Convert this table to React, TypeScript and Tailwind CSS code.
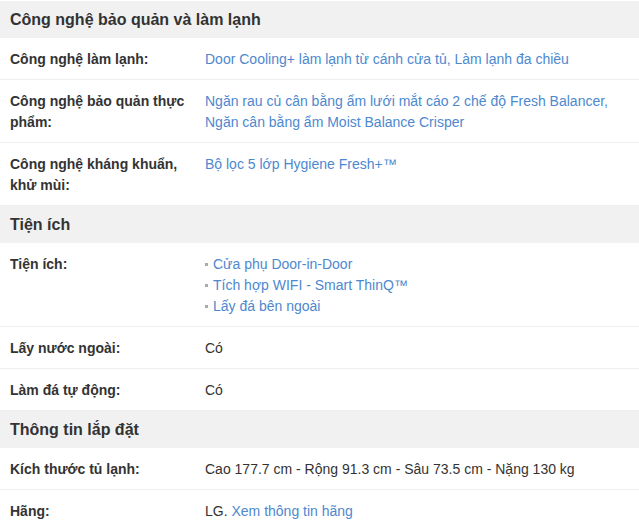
const blue = "text-[#4d88cf]";

type Row = {
  label: string;
  value?: React.ReactNode;
};

function Header({ title }: { title: string }) {
  return (
    <div className="h-[37px] bg-[#f1f1f1] px-[10px] flex items-center text-[16px] font-bold text-[#333]">
      {title}
    </div>
  );
}

function SpecRow({ label, value }: Row) {
  return (
    <div className="flex border-b border-[#eeeeee] pt-[11px] pb-[9px] text-[14px] leading-[21px]">
      <div className="w-[205px] shrink-0 pl-[10px] pr-[15px] font-bold text-[#333]">{label}</div>
      <div className="flex-1 pr-[10px] text-[#333]">{value}</div>
    </div>
  );
}

function Bullet({ children }: { children: React.ReactNode }) {
  return (
    <div className="flex items-center">
      <span className="inline-block w-[3px] h-[3px] bg-[#aaaaaa] mr-[5px]" />
      <span className={blue}>{children}</span>
    </div>
  );
}

export default function App() {
  return (
    <div
      className="w-[639px] h-[530px] overflow-hidden bg-white pt-[1px]"
      style={{ fontFamily: '"Liberation Sans", Arial, sans-serif' }}
    >
      <Header title="Công nghệ bảo quản và làm lạnh" />
      <SpecRow
        label="Công nghệ làm lạnh:"
        value={<span className={blue}>Door Cooling+ làm lạnh từ cánh cửa tủ, Làm lạnh đa chiều</span>}
      />
      <SpecRow
        label="Công nghệ bảo quản thực phẩm:"
        value={
          <span className={blue}>
            Ngăn rau củ cân bằng ẩm lưới mắt cáo 2 chế độ Fresh Balancer, Ngăn cân bằng ẩm Moist Balance Crisper
          </span>
        }
      />
      <SpecRow
        label="Công nghệ kháng khuẩn, khử mùi:"
        value={<span className={blue}>Bộ lọc 5 lớp Hygiene Fresh+™</span>}
      />
      <Header title="Tiện ích" />
      <SpecRow
        label="Tiện ích:"
        value={
          <div>
            <Bullet>Cửa phụ Door-in-Door</Bullet>
            <Bullet>Tích hợp WIFI - Smart ThinQ™</Bullet>
            <Bullet>Lấy đá bên ngoài</Bullet>
          </div>
        }
      />
      <SpecRow label="Lấy nước ngoài:" value="Có" />
      <SpecRow label="Làm đá tự động:" value="Có" />
      <Header title="Thông tin lắp đặt" />
      <SpecRow label="Kích thước tủ lạnh:" value="Cao 177.7 cm - Rộng 91.3 cm - Sâu 73.5 cm - Nặng 130 kg" />
      <SpecRow
        label="Hãng:"
        value={
          <span>
            LG. <span className={blue}>Xem thông tin hãng</span>
          </span>
        }
      />
    </div>
  );
}
